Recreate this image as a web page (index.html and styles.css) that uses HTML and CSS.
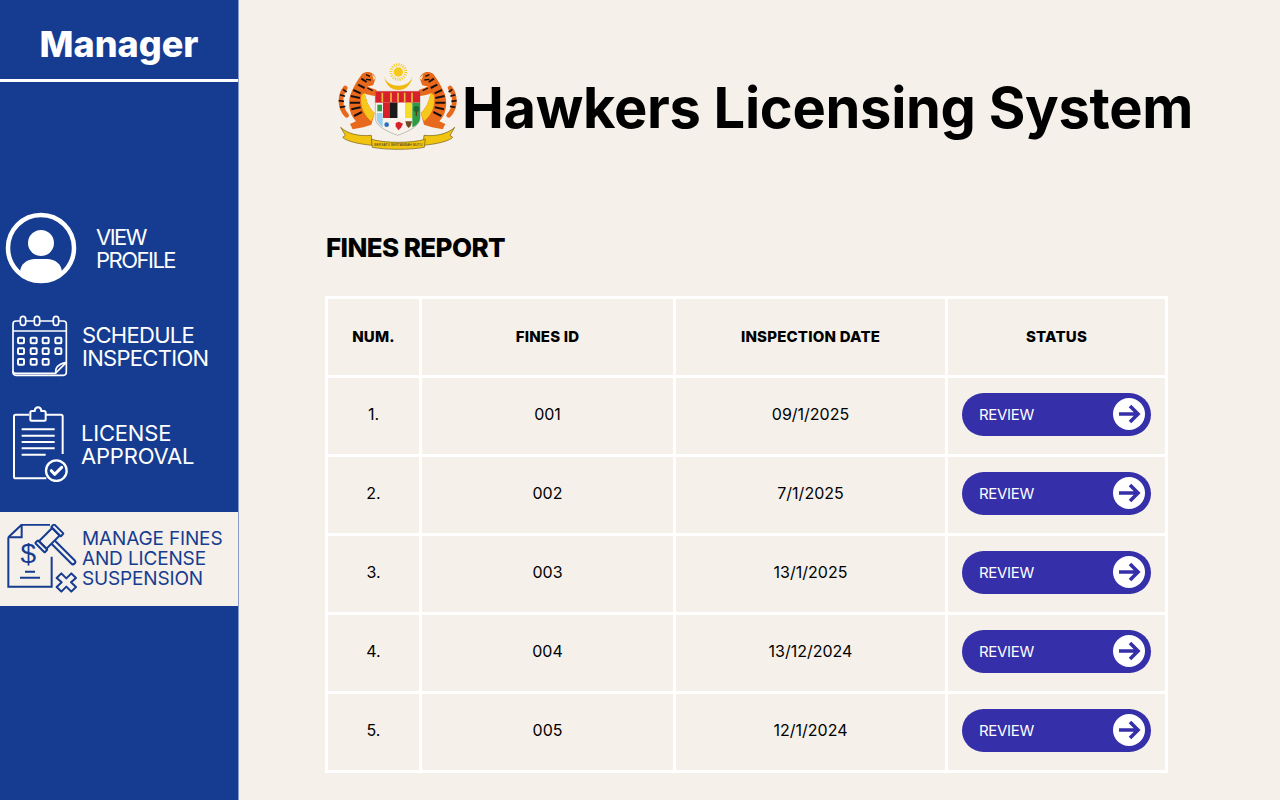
FILE: index.html
```html
<!DOCTYPE html>
<html lang="en">
<head>
    <meta charset="utf-8" />
    <title>Fines Report</title>
    <link rel="stylesheet" href="styles.css">
</head>
<body>
<div class="page">
    <aside class="sidebar">
        <div class="role">Manager</div>
        <nav class="menu">
            <a class="item item-profile">
                <svg class="icon" width="72" height="72" viewBox="0 0 72 72">
                    <defs><clipPath id="ring"><circle cx="36" cy="36" r="34"/></clipPath></defs>
                    <circle cx="36" cy="36" r="33" fill="none" stroke="#fff" stroke-width="4.5"/>
                    <circle cx="36" cy="31" r="13" fill="#fff"/>
                    <path d="M15 70V61C15 52 22 47 30 47H42C50 47 57 52 57 61V70Z" fill="#fff" clip-path="url(#ring)"/>
                </svg>
                <span>VIEW<br>PROFILE</span>
            </a>
            <a class="item item-schedule">
                <svg class="icon" width="56" height="62" viewBox="0 0 168 186" fill="none" stroke="#fff" stroke-width="5">
                    <path d="M12 18H154Q163 18 163 27V172Q163 181 154 181H12Q3 181 3 172V27Q3 18 12 18Z"/>
                    <path d="M3 168Q3 175 12 175H130L163 142"/>
                    <path d="M132 175Q126 150 163 142" />
                    <path d="M3 48H163"/>
                    <rect x="25" y="4" width="16" height="27" rx="8" fill="#153c90"/>
                    <rect x="67" y="4" width="16" height="27" rx="8" fill="#153c90"/>
                    <rect x="124" y="4" width="16" height="27" rx="8" fill="#153c90"/>
                    <g stroke-width="6">
                        <rect x="18" y="68" width="18" height="17" rx="3"/><rect x="56" y="68" width="18" height="17" rx="3"/><rect x="92" y="68" width="18" height="17" rx="3"/><rect x="130" y="68" width="18" height="17" rx="3"/>
                        <rect x="18" y="100" width="18" height="17" rx="3"/><rect x="56" y="100" width="18" height="17" rx="3"/><rect x="92" y="100" width="18" height="17" rx="3"/><rect x="130" y="100" width="18" height="17" rx="3"/>
                        <rect x="18" y="132" width="18" height="17" rx="3"/><rect x="56" y="132" width="18" height="17" rx="3"/><rect x="92" y="132" width="18" height="17" rx="3"/>
                    </g>
                </svg>
                <span>SCHEDULE<br>INSPECTION</span>
            </a>
            <a class="item item-license">
                <svg class="icon" width="56" height="76" viewBox="0 0 168 228" fill="none" stroke="#fff" stroke-width="6">
                    <path d="M48 26H8Q3 26 3 31V212Q3 217 8 217H100"/>
                    <path d="M98 26H144Q149 26 149 31V144"/>
                    <path d="M52 42V20Q52 15 57 15H65Q66 4 75 4Q84 4 85 15H93Q98 15 98 20V42Q98 44 95 44H55Q52 44 52 42Z"/>
                    <path d="M26 70H125M26 89H125M26 108H125M26 127H125M26 146H98"/>
                    <circle cx="130" cy="194" r="31" stroke-width="7"/>
                    <path d="M115 194L125 205L146 184" stroke-width="9" stroke-linecap="round" stroke-linejoin="round"/>
                </svg>
                <span>LICENSE<br>APPROVAL</span>
            </a>
            <a class="item item-fines active">
                <svg class="icon" width="70" height="70" viewBox="0 0 210 210" fill="none" stroke="#153c90" stroke-width="6">
                    <path d="M4 40L44 2H129"/>
                    <path d="M4 40H44V2"/>
                    <path d="M4 40V188H134V98"/>
                    <text x="64" y="118" class="dollar">$</text>
                    <path d="M54 143H84M39 161H99"/>
                    <g transform="translate(127 43) rotate(-45)">
                        <rect x="-28" y="-16" width="56" height="32"/>
                        <rect x="-40" y="-20" width="12" height="40" rx="2"/>
                        <rect x="28" y="-20" width="12" height="40" rx="2"/>
                        <path d="M-7 16V100Q-7 107 0 107Q7 107 7 100V16"/>
                    </g>
                    <path d="M149 162L163 148L178 163L193 148L207 162L192 175L207 189L193 203L178 188L163 203L149 189L164 175Z" stroke-linejoin="round"/>
                </svg>
                <span>MANAGE FINES<br>AND LICENSE<br>SUSPENSION</span>
            </a>
        </nav>
    </aside>

    <main class="content">
        <header class="title-row">
            <svg class="emblem" width="128" height="100" viewBox="0 0 384 300">
                <defs>
                    <g id="tiger">
                        <path d="M50 172C28 150 28 112 46 90" fill="none" stroke="#e8691c" stroke-width="14" stroke-linecap="round"/>
                        <path d="M30 148l16-3M26 128l16 2M30 110l15 5M39 94l11 8" stroke="#1a1010" stroke-width="5"/>
                        <path d="M96 48C114 36 132 44 137 60L130 80C124 84 118 85 112 84C120 90 128 92 140 96L136 114C120 112 110 110 104 106C110 130 116 150 134 165L124 200L100 208L68 214L60 198L78 190C54 165 52 125 66 98C74 80 86 62 96 48Z" fill="#e8691c"/>
                        <path d="M94 112C90 140 98 168 124 190L134 165C116 150 110 130 104 104Z" fill="#f7c81c"/>
                        <path d="M70 96l22 10M62 114l28 6M60 134l30 0M64 154l28-6M72 174l24-12M84 80l20 10M94 62l16 10" stroke="#1a1010" stroke-width="6" fill="none"/>
                        <path d="M108 50l12 5M108 64l15 2M112 90l16 8" stroke="#1a1010" stroke-width="4"/>
                        <path d="M126 48l12 13-7 5z" fill="#f4e4b8"/>
                        <path d="M32 208C50 226 85 236 124 232L127 262C85 258 50 250 38 238L46 232Z" fill="#f1c40f" stroke="#6e5a10" stroke-width="2"/>
                    </g>
                </defs>
                <use href="#tiger"/>
                <use href="#tiger" transform="translate(406 0) scale(-1 1)"/>
                <path d="M163 52A42 44 0 0 0 247 52A42 31 0 0 1 163 52Z" fill="#efb90f"/>
                <circle cx="205" cy="42" r="14" fill="#f7c81c"/>
                <circle cx="205" cy="42" r="22" fill="none" stroke="#f7c81c" stroke-width="9" stroke-dasharray="3 3.9"/>
                <path d="M136 100H270V180C270 205 235 220 203 232C171 220 136 205 136 180Z" fill="#f7f3ea" stroke="#555" stroke-width="1"/>
                <rect x="136" y="100" width="134" height="34" fill="#d8202a"/>
                <path d="M157 104v28M183 104v28M204 104v28M224 104v28M246 104v28" stroke="#e8b93a" stroke-width="5"/>
                <rect x="159" y="134" width="21" height="46" fill="#d8202a"/>
                <rect x="180" y="134" width="23" height="46" fill="#1a1a1a"/>
                <rect x="203" y="134" width="22" height="46" fill="#fbf8ef"/>
                <rect x="225" y="134" width="22" height="46" fill="#f7dc2b"/>
                <path d="M247 134H270V180C270 193 260 202 247 208Z" fill="#2e9c46"/>
                <circle cx="259" cy="153" r="9" fill="#1e6b2e"/>
                <rect x="257" y="160" width="4" height="14" fill="#5b3a1a"/>
                <path d="M140 165H158V208C148 200 140 192 140 180Z" fill="#9dd0ea"/>
                <rect x="142" y="140" width="14" height="20" fill="#2e9c46"/>
                <circle cx="170" cy="200" r="7" fill="#2a6fc0"/>
                <path d="M197 195l10-4 12 6-6 12-8 8-8-12z" fill="#d8202a"/>
                <path d="M226 190h20l-4 14-6 6-6-6z" fill="#6e4a24"/>
                <path d="M124 244C170 256 240 256 286 244L283 268C240 276 170 276 127 268Z" fill="#f1c40f" stroke="#6e5a10" stroke-width="2"/>
                <text x="133" y="263" class="motto" textLength="144">BERSATU BERTAMBAH MUTU</text>
            </svg>
            <h1>Hawkers Licensing System</h1>
        </header>

        <h2>FINES REPORT</h2>

        <div class="report">
            <div class="cell head">NUM.</div>
            <div class="cell head">FINES ID</div>
            <div class="cell head">INSPECTION DATE</div>
            <div class="cell head">STATUS</div>

            <div class="cell">1.</div>
            <div class="cell">001</div>
            <div class="cell">09/1/2025</div>
            <div class="cell"><button class="review">REVIEW<svg width="32" height="32" viewBox="0 0 32 32"><circle cx="16" cy="16" r="16" fill="#fff"/><path d="M6 16H25M17 8L25 16L17 24" fill="none" stroke="#352fa9" stroke-width="3.6"/></svg></button></div>

            <div class="cell">2.</div>
            <div class="cell">002</div>
            <div class="cell">7/1/2025</div>
            <div class="cell"><button class="review">REVIEW<svg width="32" height="32" viewBox="0 0 32 32"><circle cx="16" cy="16" r="16" fill="#fff"/><path d="M6 16H25M17 8L25 16L17 24" fill="none" stroke="#352fa9" stroke-width="3.6"/></svg></button></div>

            <div class="cell">3.</div>
            <div class="cell">003</div>
            <div class="cell">13/1/2025</div>
            <div class="cell"><button class="review">REVIEW<svg width="32" height="32" viewBox="0 0 32 32"><circle cx="16" cy="16" r="16" fill="#fff"/><path d="M6 16H25M17 8L25 16L17 24" fill="none" stroke="#352fa9" stroke-width="3.6"/></svg></button></div>

            <div class="cell">4.</div>
            <div class="cell">004</div>
            <div class="cell">13/12/2024</div>
            <div class="cell"><button class="review">REVIEW<svg width="32" height="32" viewBox="0 0 32 32"><circle cx="16" cy="16" r="16" fill="#fff"/><path d="M6 16H25M17 8L25 16L17 24" fill="none" stroke="#352fa9" stroke-width="3.6"/></svg></button></div>

            <div class="cell">5.</div>
            <div class="cell">005</div>
            <div class="cell">12/1/2024</div>
            <div class="cell"><button class="review">REVIEW<svg width="32" height="32" viewBox="0 0 32 32"><circle cx="16" cy="16" r="16" fill="#fff"/><path d="M6 16H25M17 8L25 16L17 24" fill="none" stroke="#352fa9" stroke-width="3.6"/></svg></button></div>
        </div>
    </main>
</div>
</body>
</html>
```

FILE: styles.css
```css
body{
    margin: 0;
    background-color: #f5f0ea;
    font-family: "Inter", "Liberation Sans", sans-serif;
    color: #000;
}
.page{
    display: flex;
    height: 800px;
    overflow: hidden;
}

/* sidebar */
.sidebar{
    width: 238px;
    flex: none;
    background-color: #153c90;
    border-right: 1px solid #8b9cc9;
    color: #fff;
}
.role{
    height: 58px;
    padding-top: 21px;
    border-bottom: 3px solid #fff;
    text-align: center;
    font-size: 36px;
    line-height: 46px;
    font-weight: 800;
}
.menu{
    margin-top: 117px;
}
.item{
    display: flex;
    align-items: center;
    height: 98px;
    font-size: 22px;
    line-height: 23px;
    font-weight: 400;
}
.item span{
    margin-top: 2px;
}
.item-profile{
    padding-left: 5px;
    gap: 19px;
    letter-spacing: -1.5px;
}
.item-schedule{
    padding-left: 12px;
    gap: 14px;
    letter-spacing: -0.7px;
}
.item-license{
    padding-left: 13px;
    gap: 12px;
    letter-spacing: -0.2px;
}
.item-fines{
    padding-left: 7px;
    gap: 5px;
}
.active{
    margin-top: 19px;
    height: 94px;
    background-color: #f5f0ea;
    color: #153c90;
    font-size: 19px;
    line-height: 20px;
    letter-spacing: -0.15px;
}
.active span{
    margin-top: 0;
}
.icon{
    flex: none;
}
.dollar{
    font-family: "Liberation Sans", sans-serif;
    font-size: 84px;
    fill: #153c90;
    stroke: none;
    text-anchor: middle;
}

/* title */
.content{
    flex: 1;
    padding-left: 86px;
}
.title-row{
    display: flex;
    align-items: center;
    margin: 58px 0 0 5px;
    height: 100px;
}
.emblem{
    flex: none;
}
.motto{
    font-size: 10px;
    font-family: "Liberation Sans", sans-serif;
    fill: #333;
}
h1{
    margin: 0 0 0 4px;
    font-size: 56px;
    line-height: 100px;
    font-weight: 700;
    letter-spacing: -0.3px;
    white-space: nowrap;
}
h2{
    margin: 70px 0 0 1px;
    font-size: 26px;
    line-height: 40px;
    font-weight: 800;
    letter-spacing: -0.6px;
}

/* table */
.report{
    display: grid;
    grid-template-columns: 91px 251px 269px 217px;
    grid-template-rows: repeat(6, 76px);
    gap: 3px;
    width: max-content;
    margin-top: 28px;
    padding: 3px;
    background-color: #fff;
}
.cell{
    display: flex;
    align-items: center;
    justify-content: center;
    padding-bottom: 4px;
    background-color: #f5f0ea;
    font-size: 16px;
}
.head{
    padding-bottom: 2px;
    font-size: 15px;
    font-weight: 800;
    letter-spacing: 0.2px;
}
.review{
    display: flex;
    align-items: center;
    justify-content: space-between;
    width: 189px;
    height: 43px;
    padding: 0 6px 0 17px;
    border: 0;
    border-radius: 22px;
    background-color: #352fa9;
    color: #fff;
    font-family: inherit;
    font-size: 15px;
    font-weight: 400;
    letter-spacing: -0.3px;
}
```
